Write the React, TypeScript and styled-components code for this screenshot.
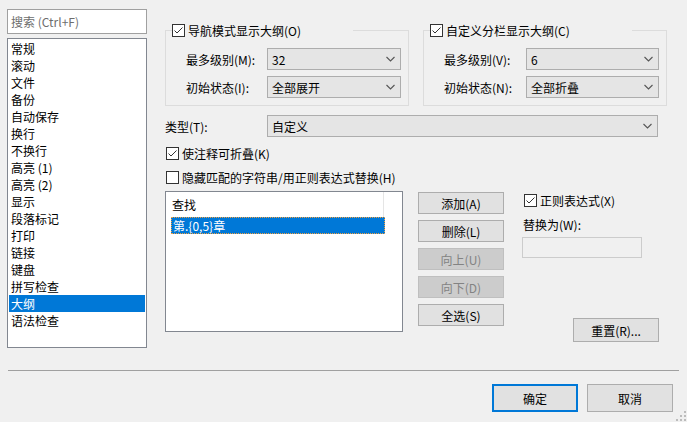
import React from "react";
import styled, { createGlobalStyle } from "styled-components";

const Global = createGlobalStyle`
  html, body { margin: 0; padding: 0; background: #f0f0f0; }
  body {
    font-family: "Noto Sans CJK SC", "Noto Sans", sans-serif;
    font-size: 12px;
    color: #000;
  }
  #root { width: 687px; height: 422px; }
`;

const Window = styled.div`
  position: relative;
  width: 687px;
  height: 422px;
  background: #f0f0f0;
  overflow: hidden;
  display: flex;
  flex-direction: column;
`;

const Main = styled.div`
  display: flex;
  gap: 18px;
  padding: 9px 0 0 7px;
  height: 370px;
  box-sizing: border-box;
`;

const Sidebar = styled.div`
  width: 140px;
  display: flex;
  flex-direction: column;
  gap: 4px;
`;

const SearchBox = styled.div`
  height: 25px;
  box-sizing: border-box;
  border: 1px solid #a0a0a0;
  background: #fff;
  color: #6d6d6d;
  padding-left: 3px;
  display: flex;
  align-items: center;
`;

const PageList = styled.div`
  height: 310px;
  box-sizing: border-box;
  border: 1px solid #828790;
  background: #fff;
  padding: 1px;
`;

const PageItem = styled.div<{ $selected?: boolean }>`
  height: 17px;
  line-height: 17px;
  padding-left: 2px;
  white-space: nowrap;
  background: ${(p) => (p.$selected ? "#0078d7" : "transparent")};
  color: ${(p) => (p.$selected ? "#fff" : "#000")};
`;

const Panel = styled.div`
  width: 504px;
  margin-top: 15px;
  display: flex;
  flex-direction: column;
`;

const Groups = styled.div`
  display: flex;
  gap: 14px;
`;

const Group = styled.fieldset`
  margin: 0;
  width: 244px;
  min-width: 0;
  box-sizing: border-box;
  border: 1px solid #dcdcdc;
  padding: 11px 7px 7px 6px;
`;

const Legend = styled.legend<{ $w: number }>`
  padding: 0;
  width: ${(p) => p.$w}px;
  height: 13px;
  display: flex;
  align-items: center;
  gap: 3px;
  line-height: 13px;
  white-space: nowrap;
`;

const FieldGrid = styled.div<{ $label: number; $combo: number }>`
  display: grid;
  grid-template-columns: ${(p) => p.$label}px ${(p) => p.$combo}px;
  row-gap: 6px;
  padding-left: 14px;
  align-items: center;
`;

const Label = styled.span`
  white-space: nowrap;
  line-height: 17px;
`;

const ComboBox = styled.div`
  height: 22px;
  box-sizing: border-box;
  border: 1px solid #adadad;
  background: #e5e5e5;
  display: flex;
  align-items: center;
  justify-content: space-between;
  padding: 0 5px 0 4px;
  white-space: nowrap;
`;

const TypeRow = styled.div`
  display: grid;
  grid-template-columns: 102px 391px;
  align-items: center;
  margin-top: 9px;
`;

const CheckRow = styled.label<{ $top: number }>`
  display: flex;
  align-items: center;
  gap: 3px;
  height: 18px;
  padding-left: 1px;
  margin-top: ${(p) => p.$top}px;
  white-space: nowrap;
`;

const Box = styled.span`
  width: 13px;
  height: 13px;
  box-sizing: border-box;
  border: 1px solid #333;
  background: #fff;
  display: inline-flex;
  flex: none;
`;

const Lower = styled.div`
  display: flex;
  margin-top: 5px;
`;

const FindList = styled.div`
  width: 238px;
  height: 141px;
  box-sizing: border-box;
  border: 1px solid #828790;
  background: #fff;
`;

const FindHeader = styled.div`
  width: 218px;
  height: 25px;
  box-sizing: border-box;
  border-right: 1px solid #e5e5e5;
  padding-left: 6px;
  display: flex;
  align-items: center;
`;

const FindItem = styled.div`
  margin-left: 5px;
  width: 214px;
  height: 17px;
  box-sizing: border-box;
  border: 1px dotted #f0a040;
  background: #0078d7;
  color: #fff;
  line-height: 15px;
  padding-left: 1px;
`;

const ButtonCol = styled.div`
  margin-left: 15px;
  padding-top: 1px;
  display: flex;
  flex-direction: column;
  gap: 6px;
`;

const Button = styled.button<{ $h?: number; $default?: boolean }>`
  width: 86px;
  height: ${(p) => p.$h ?? 22}px;
  box-sizing: border-box;
  margin: 0;
  padding: 0;
  font: inherit;
  color: #000;
  background: #e1e1e1;
  border: ${(p) => (p.$default ? "2px solid #0078d7" : "1px solid #adadad")};
  display: flex;
  align-items: center;
  justify-content: center;
  &:disabled {
    background: #cccccc;
    border-color: #bfbfbf;
    color: #838383;
  }
`;

const RightCol = styled.div`
  margin-left: 19px;
  padding-top: 1px;
  display: flex;
  flex-direction: column;
  align-items: flex-start;
  flex: 1;
`;

const FieldCaption = styled.div`
  height: 17px;
  line-height: 17px;
  margin-top: 7px;
`;

const TextInput = styled.div`
  width: 120px;
  height: 21px;
  margin-top: 4px;
  margin-left: -1px;
  box-sizing: border-box;
  border: 1px solid #cccccc;
  background: #f0f0f0;
`;

const ResetButton = styled(Button)`
  align-self: flex-end;
  margin-top: 60px;
  margin-right: 10px;
`;

const Separator = styled.div`
  height: 1px;
  width: 671px;
  margin-left: 8px;
  background: #a0a0a0;
`;

const Footer = styled.div`
  display: flex;
  justify-content: flex-end;
  gap: 9px;
  padding: 13px 14px 0 0;
`;

const Grip = styled.svg`
  position: absolute;
  right: 1px;
  bottom: 1px;
`;

const Chevron = () => (
  <svg width="9" height="6" viewBox="0 0 9 6">
    <polyline points="0.5,1 4.5,5 8.5,1" fill="none" stroke="#555" strokeWidth="1.1" />
  </svg>
);

const Check = ({ checked }: { checked?: boolean }) => (
  <Box>
    {checked && (
      <svg width="11" height="11" viewBox="0 0 11 11">
        <polyline points="1.5,5.5 4,8 9.5,2.5" fill="none" stroke="#333" strokeWidth="1" />
      </svg>
    )}
  </Box>
);

const Combo = ({ value }: { value: string }) => (
  <ComboBox>
    <span>{value}</span>
    <Chevron />
  </ComboBox>
);

const pages = [
  "常规", "滚动", "文件", "备份", "自动保存", "换行", "不换行", "高亮 (1)", "高亮 (2)",
  "显示", "段落标记", "打印", "链接", "键盘", "拼写检查", "大纲", "语法检查",
];

export default function App() {
  return (
    <Window>
      <Global />
      <Main>
        <Sidebar>
          <SearchBox>搜索 (Ctrl+F)</SearchBox>
          <PageList>
            {pages.map((p) => (
              <PageItem key={p} $selected={p === "大纲"}>{p}</PageItem>
            ))}
          </PageList>
        </Sidebar>
        <Panel>
          <Groups>
            <Group>
              <Legend $w={181}>
                <Check checked />
                <span>导航模式显示大纲(O)</span>
              </Legend>
              <FieldGrid $label={81} $combo={134}>
                <Label>最多级别(M):</Label>
                <Combo value="32" />
                <Label>初始状态(I):</Label>
                <Combo value="全部展开" />
              </FieldGrid>
            </Group>
            <Group>
              <Legend $w={202}>
                <Check checked />
                <span>自定义分栏显示大纲(C)</span>
              </Legend>
              <FieldGrid $label={82} $combo={133}>
                <Label>最多级别(V):</Label>
                <Combo value="6" />
                <Label>初始状态(N):</Label>
                <Combo value="全部折叠" />
              </FieldGrid>
            </Group>
          </Groups>
          <TypeRow>
            <Label>类型(T):</Label>
            <Combo value="自定义" />
          </TypeRow>
          <CheckRow $top={7}>
            <Check checked />
            <span>使注释可折叠(K)</span>
          </CheckRow>
          <CheckRow $top={6}>
            <Check />
            <span>隐藏匹配的字符串/用正则表达式替换(H)</span>
          </CheckRow>
          <Lower>
            <FindList>
              <FindHeader>查找</FindHeader>
              <FindItem>第.{"{0,5}"}章</FindItem>
            </FindList>
            <ButtonCol>
              <Button>添加(A)</Button>
              <Button>删除(L)</Button>
              <Button disabled>向上(U)</Button>
              <Button disabled>向下(D)</Button>
              <Button>全选(S)</Button>
            </ButtonCol>
            <RightCol>
              <CheckRow $top={0} style={{ height: 17 }}>
                <Check checked />
                <span>正则表达式(X)</span>
              </CheckRow>
              <FieldCaption>替换为(W):</FieldCaption>
              <TextInput />
              <ResetButton $h={24}>重置(R)...</ResetButton>
            </RightCol>
          </Lower>
        </Panel>
      </Main>
      <Separator />
      <Footer>
        <Button $h={28} $default>确定</Button>
        <Button $h={28}>取消</Button>
      </Footer>
      <Grip width="10" height="10" viewBox="0 0 10 10">
        {[[8, 0], [8, 4], [4, 4], [8, 8], [4, 8], [0, 8]].map(([x, y]) => (
          <rect key={`${x}-${y}`} x={x} y={y} width="2" height="2" fill="#bcbcbc" />
        ))}
      </Grip>
    </Window>
  );
}
